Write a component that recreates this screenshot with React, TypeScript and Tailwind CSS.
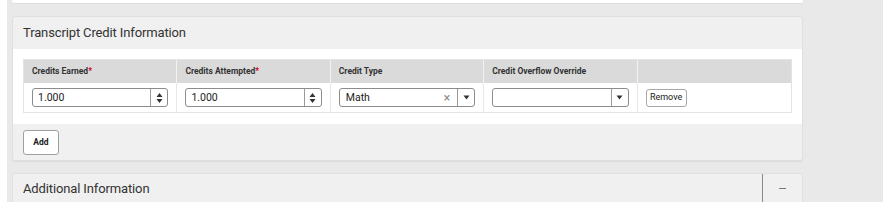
const font = { fontFamily: "Roboto, 'Liberation Sans', sans-serif" };

function Spinner() {
  return (
    <div className="flex h-full w-[17px] flex-col items-center justify-center border-l border-[#9a9a9a]">
      <svg width="7" height="12" viewBox="0 0 7 12">
        <path d="M3.5 1 L6.5 5 L0.5 5 Z" fill="#333" />
        <path d="M3.5 11 L6.5 7 L0.5 7 Z" fill="#333" />
      </svg>
    </div>
  );
}

function Caret() {
  return (
    <div className="flex h-full w-[17px] items-center justify-center border-l border-[#9a9a9a]">
      <svg width="7" height="5" viewBox="0 0 7 5">
        <path d="M0.5 0.5 L6.5 0.5 L3.5 4.5 Z" fill="#333" />
      </svg>
    </div>
  );
}

function NumberInput({ value }: { value: string }) {
  return (
    <div className="flex h-[19px] w-[137px] items-center rounded-[3px] border border-[#8c8c8c] bg-white">
      <span className="flex-1 pl-[5px] text-[10.5px] text-[#222]">{value}</span>
      <Spinner />
    </div>
  );
}

const headers = [
  { label: "Credits Earned", required: true },
  { label: "Credits Attempted", required: true },
  { label: "Credit Type", required: false },
  { label: "Credit Overflow Override", required: false },
  { label: "", required: false },
];

export default function App() {
  return (
    <div className="h-[219px] w-[891px] bg-white" style={font}>
      <div className="ml-[7px] h-[202px] w-[876px] overflow-hidden bg-[#e9e9e9] pl-[5px]">
        <div className="flex w-[791px] flex-col">
          <div className="h-[4px] rounded-b-[3px] border-b border-[#dedede] bg-white" />

          <section className="mt-[12px] rounded-[3px] border border-[#e0e0e0] bg-[#f0f0f0] shadow-[0_1px_1px_rgba(0,0,0,0.06)]">
            <header className="flex h-[32px] items-center px-[10px] text-[13px] tracking-[-0.01em] text-[#333]">
              Transcript Credit Information
            </header>
            <div className="bg-white px-[10px] pb-[11px] pt-[10px]">
              <div className="border border-[#e3e3e3]">
                <div className="grid h-[23px] grid-cols-5 bg-[#dadada]">
                  {headers.map((h, i) => (
                    <div
                      key={i}
                      className="flex items-center border-r border-[#f2f2f2] px-[8px] text-[8.5px] font-bold text-[#333] last:border-r-0"
                    >
                      {h.label}
                      {h.required ? <span className="text-[#d0021b]">*</span> : null}
                    </div>
                  ))}
                </div>
                <div className="grid h-[29px] grid-cols-5">
                  <div className="flex items-center border-r border-[#e8e8e8] px-[8px]">
                    <NumberInput value="1.000" />
                  </div>
                  <div className="flex items-center border-r border-[#e8e8e8] px-[8px]">
                    <NumberInput value="1.000" />
                  </div>
                  <div className="flex items-center border-r border-[#e8e8e8] px-[8px]">
                    <div className="flex h-[19px] w-[137px] items-center rounded-[3px] border border-[#8c8c8c] bg-white">
                      <span className="flex-1 pl-[6px] text-[10.5px] text-[#222]">Math</span>
                      <span className="pr-[7px] text-[12px] leading-none text-[#888]">×</span>
                      <Caret />
                    </div>
                  </div>
                  <div className="flex items-center border-r border-[#e8e8e8] px-[8px]">
                    <div className="flex h-[19px] w-[137px] items-center rounded-[3px] border border-[#8c8c8c] bg-white">
                      <span className="flex-1" />
                      <Caret />
                    </div>
                  </div>
                  <div className="flex items-center px-[8px]">
                    <button
                      type="button"
                      className="h-[18px] w-[41px] rounded-[3px] border border-[#a8a8a8] bg-white text-[9px] text-[#222]"
                    >
                      Remove
                    </button>
                  </div>
                </div>
              </div>
            </div>
            <div className="flex h-[36px] items-center px-[10px]">
              <button
                type="button"
                className="h-[25px] w-[36px] rounded-[3px] border border-[#a0a0a0] bg-white text-[8.5px] font-bold text-[#222]"
              >
                Add
              </button>
            </div>
          </section>

          <section className="mt-[12px] flex h-[30px] rounded-t-[3px] border border-b-0 border-[#e0e0e0] bg-[#f0f0f0]">
            <header className="flex flex-1 items-center px-[10px] text-[13px] tracking-[-0.01em] text-[#333]">
              Additional Information
            </header>
            <div className="flex w-[40px] items-center justify-center border-l border-[#8a8a8a]">
              <span className="block h-[1.5px] w-[7px] bg-[#777]" />
            </div>
          </section>
        </div>
      </div>
    </div>
  );
}
